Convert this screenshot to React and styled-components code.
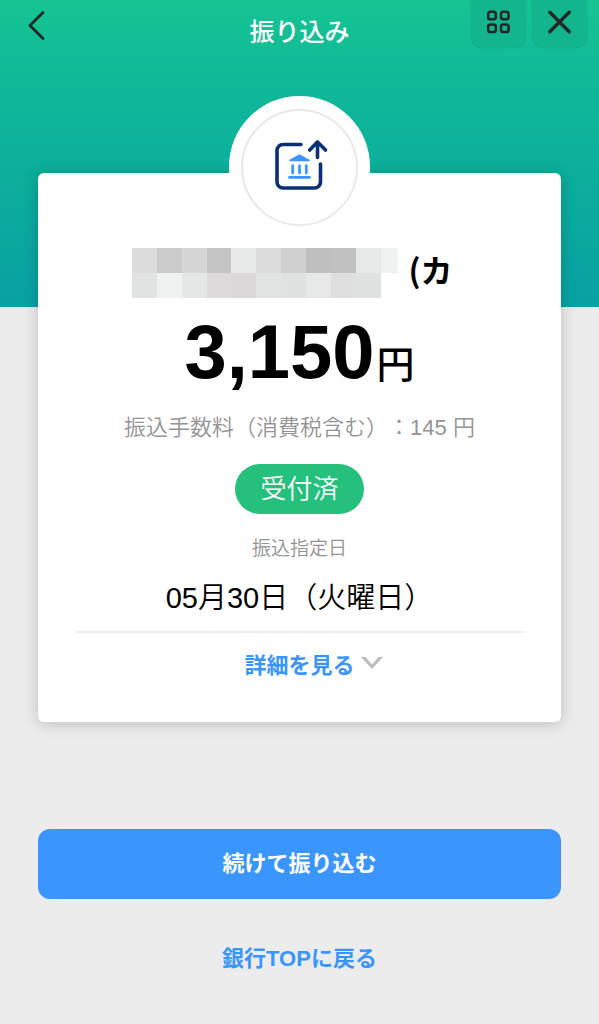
import React from "react";
import styled, { createGlobalStyle } from "styled-components";

const GlobalStyle = createGlobalStyle`
  *, *::before, *::after { box-sizing: border-box; }
  body {
    margin: 0;
    background: #ececec;
    color: #000;
    font-family: "Liberation Sans", "Noto Sans CJK JP", sans-serif;
    text-spacing-trim: space-all;
  }
  button { font: inherit; border: 0; padding: 0; background: none; cursor: pointer; }
`;

const Page = styled.div`
  min-height: 100vh;
  padding-bottom: 40px;
  background: linear-gradient(#15c491 0, #10b999 80px, #0cad9c 190px, #08a1a4 307px) top / 100% 307px no-repeat;
`;

const Header = styled.header`
  display: grid;
  grid-template-columns: 1fr auto 1fr;
  align-items: start;
  height: 62px;
  padding: 0 12px;
`;

const Title = styled.h1`
  margin: 0;
  color: #fff;
  font-size: 25px;
  font-weight: 500;
  line-height: 60px;
  font-family: "Noto Sans CJK JP", sans-serif;
`;

const BackButton = styled.button`
  display: grid;
  place-items: center;
  width: 50px;
  height: 52px;
`;

const Tiles = styled.div`
  display: flex;
  justify-content: flex-end;
  gap: 6px;
`;

const TileButton = styled.button`
  display: grid;
  justify-items: center;
  align-items: end;
  width: 55px;
  height: 48px;
  padding-bottom: 14px;
  border-radius: 0 0 12px 12px;
  background: #12b58c;
  box-shadow: 0 0 1px rgba(0, 100, 90, 0.5);
`;

const Main = styled.main`
  padding: 0 38px;
  margin-top: 111px;
`;

const Card = styled.section`
  display: flex;
  flex-direction: column;
  align-items: center;
  padding: 0 38px 39px;
  border-radius: 6px;
  background: #fff;
  box-shadow: 0 2px 16px rgba(0, 0, 0, 0.2);
`;

const Medallion = styled.div`
  display: grid;
  place-items: center;
  width: 141px;
  height: 141px;
  margin-top: -77px;
  border-radius: 50%;
  background: #fff;
`;

const Ring = styled.div`
  display: grid;
  justify-items: center;
  align-items: start;
  width: 117px;
  height: 117px;
  margin-top: 2px;
  padding: 28px 0 0 4px;
  border: 2px solid #e9e9e9;
  border-radius: 50%;
`;

const Payee = styled.h2`
  display: flex;
  gap: 10px;
  margin: 11px 0 0;
  padding-right: 14px;
  font-family: "Noto Sans CJK JP", sans-serif;
  font-size: 32px;
  font-weight: 700;
  line-height: 42px;
  height: 50px;
`;

const Amount = styled.p`
  display: flex;
  align-items: baseline;
  gap: 2px;
  margin: 14px 0 0;
  height: 80px;
  font-size: 76px;
  font-weight: 700;
  line-height: 80px;
`;

const Yen = styled.span`
  font-family: "Noto Sans CJK JP", sans-serif;
  font-size: 38px;
  font-weight: 500;
  line-height: 40px;
`;

const Fee = styled.p`
  margin: 20px 0 0;
  color: #949494;
  font-size: 22px;
  font-weight: 350;
  line-height: 32px;
  white-space: nowrap;
`;

const Status = styled.p`
  margin: 20px 0 0;
  padding: 0 25px;
  border-radius: 25px;
  background: #24c07c;
  color: #fff;
  font-size: 26px;
  font-weight: 350;
  line-height: 50px;
`;

const Schedule = styled.dl`
  align-self: stretch;
  margin: 21px 0 0;
  padding-bottom: 13px;
  border-bottom: 2px solid #ededed;
  text-align: center;
  font-weight: 350;
`;

const ScheduleLabel = styled.dt`
  color: #949494;
  font-size: 19px;
  line-height: 28px;
`;

const ScheduleDate = styled.dd`
  margin: 15px 0 0;
  font-size: 29px;
  line-height: 40px;
  white-space: nowrap;
`;

const DetailsButton = styled.button`
  display: grid;
  grid-template-columns: 1fr auto 1fr;
  align-items: center;
  align-self: stretch;
  gap: 6px;
  margin-top: 10px;
  color: #3a95ff;
  font-family: "Noto Sans CJK JP", sans-serif;
  font-size: 22px;
  font-weight: 700;
  line-height: 40px;

  span { grid-column: 2; }
`;

const Actions = styled.div`
  display: flex;
  flex-direction: column;
  align-items: center;
  gap: 40px;
  margin-top: 107px;
`;

const PrimaryButton = styled.button`
  align-self: stretch;
  border-radius: 12px;
  background: #3a95ff;
  color: #fff;
  font-size: 22px;
  font-weight: 700;
  line-height: 70px;
`;

const TextLink = styled.a`
  color: #3a95ff;
  font-size: 22px;
  font-weight: 700;
  line-height: 40px;
  text-decoration: none;
`;

const MASK_ROWS = [
  ["#dcdcdc", "#cbcbcb", "#d6d6d6", "#c5c5c5", "#e7e9e8", "#dcdcdc", "#d0d0d0", "#bfbfbf", "#c1c1c1", "#e7e9e8", "#f0f2f1"],
  ["#e1e3e2", "#f0f2f1", "#e5e7e6", "#dcdadb", "#dad8d9", "#e2e4e3", "#e0e2e1", "#e7e9e8", "#dfdfdf", "#e0e2e1"],
];

function MaskedName() {
  return (
    <svg width="266" height="50" viewBox="0 0 266 50" role="img" aria-label="非表示" shapeRendering="crispEdges">
      {MASK_ROWS.map((row, y) =>
        row.map((fill, x) => <rect key={`${x}-${y}`} x={x * 24.85} y={y * 25} width="25" height="25" fill={fill} />)
      )}
    </svg>
  );
}

function TransferIcon() {
  return (
    <svg width="54" height="52" viewBox="0 0 54 52" fill="none" aria-hidden="true">
      <g stroke="#0b2f74" strokeWidth="3.6" strokeLinecap="round" strokeLinejoin="round">
        <path d="M26 5.500H8a6 6 0 0 0-6 6V43a6 6 0 0 0 6 6H39.500a6 6 0 0 0 6-6V25" />
        <path d="M42.500 18.500V3M34.700 11 42.500 3 50.500 11" />
      </g>
      <path d="M24.500 15.300 34.500 20.700c.5.500.2 1.500-.6 1.500H15.100c-.8 0-1.100-1-.6-1.500z" fill="#3a95ff" />
      <path d="M17.700 26.500v7.500M24.500 26.500v7.500M31.300 26.500v7.500M14.500 38.400h20" stroke="#3a95ff" strokeWidth="2.700" strokeLinecap="round" />
    </svg>
  );
}

export default function App() {
  return (
    <>
      <GlobalStyle />
      <Page>
        <Header>
          <BackButton aria-label="戻る">
            <svg width="20" height="32" viewBox="0 0 20 32" fill="none" stroke="#262626" strokeWidth="2.800" strokeLinecap="round" strokeLinejoin="round" aria-hidden="true">
              <path d="M16 2.500 3 15.500 16 28.500" />
            </svg>
          </BackButton>
          <Title>振り込み</Title>
          <Tiles>
            <TileButton aria-label="メニュー">
              <svg width="24" height="24" viewBox="0 0 24 24" fill="none" stroke="#262626" strokeWidth="2.500" aria-hidden="true">
                <rect x="1.200" y="1.700" width="7.600" height="7.600" rx="2.200" />
                <rect x="14" y="1.700" width="7.600" height="7.600" rx="2.200" />
                <rect x="1.200" y="14.500" width="7.600" height="7.600" rx="2.200" />
                <rect x="14" y="14.500" width="7.600" height="7.600" rx="2.200" />
              </svg>
            </TileButton>
            <TileButton aria-label="閉じる">
              <svg width="24" height="24" viewBox="0 0 24 24" fill="none" stroke="#262626" strokeWidth="3.400" strokeLinecap="round" aria-hidden="true">
                <path d="M1.800 2.300 21.200 21.700M21.200 2.300 1.800 21.700" />
              </svg>
            </TileButton>
          </Tiles>
        </Header>
        <Main>
          <Card>
            <Medallion>
              <Ring>
                <TransferIcon />
              </Ring>
            </Medallion>
            <Payee>
              <MaskedName />
              <span>(カ</span>
            </Payee>
            <Amount>
              3,150<Yen>円</Yen>
            </Amount>
            <Fee>振込手数料（消費税含む）：145 円</Fee>
            <Status>受付済</Status>
            <Schedule>
              <ScheduleLabel>振込指定日</ScheduleLabel>
              <ScheduleDate>05月30日（火曜日）</ScheduleDate>
            </Schedule>
            <DetailsButton aria-expanded="false">
              <span>詳細を見る</span>
              <svg width="22" height="14" viewBox="0 0 22 14" fill="#bdbdbd" aria-hidden="true">
                <path d="M0 1H4.500L11 8.500 17.500 1H22L11 13Z" />
              </svg>
            </DetailsButton>
          </Card>
          <Actions>
            <PrimaryButton>続けて振り込む</PrimaryButton>
            <TextLink href="#top">銀行TOPに戻る</TextLink>
          </Actions>
        </Main>
      </Page>
    </>
  );
}
